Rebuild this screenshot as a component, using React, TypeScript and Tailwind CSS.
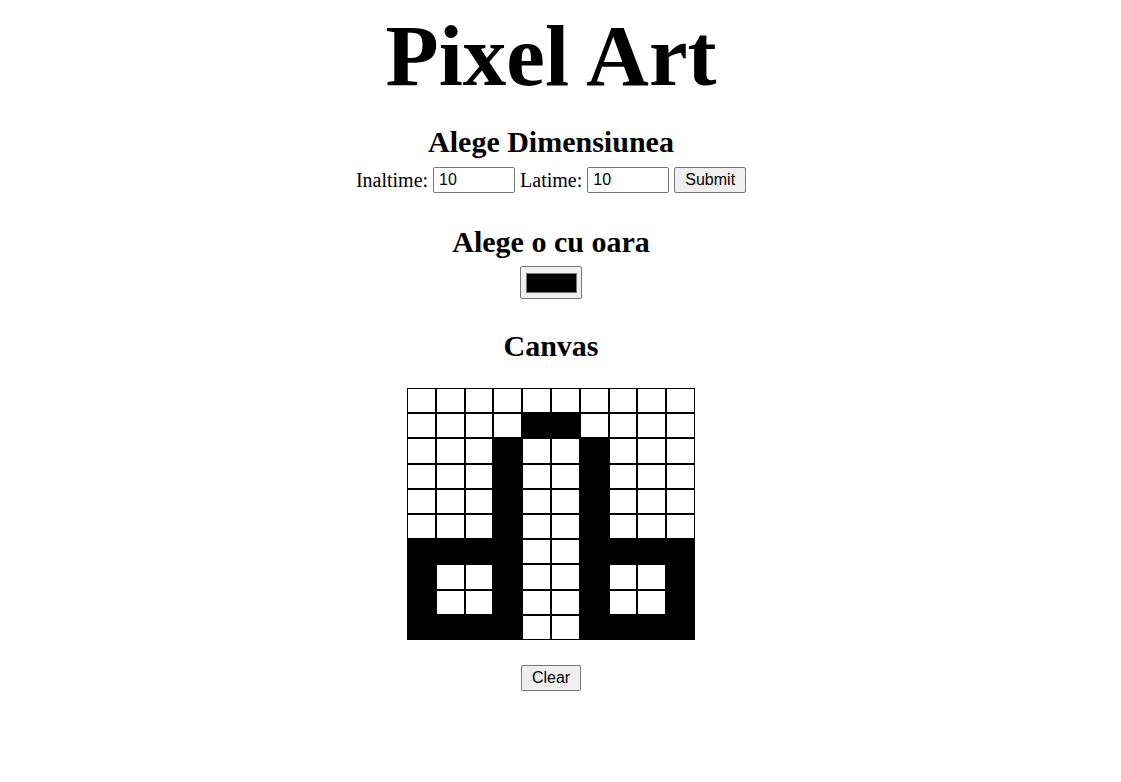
import { useState } from "react";

const ROWS = 10;
const COLS = 10;

// cells painted black in the reference drawing
const filled = new Set<string>([
  "1-4", "1-5",
  "2-3", "2-6", "3-3", "3-6", "4-3", "4-6", "5-3", "5-6",
  "6-0", "6-1", "6-2", "6-3", "6-6", "6-7", "6-8", "6-9",
  "7-0", "7-3", "7-6", "7-9",
  "8-0", "8-3", "8-6", "8-9",
  "9-0", "9-1", "9-2", "9-3", "9-6", "9-7", "9-8", "9-9",
]);

const serif = "font-['Liberation_Serif','Times_New_Roman',serif]";
const sans = "font-['Liberation_Sans',Arial,sans-serif]";

const App = () => {
  const [height, setHeight] = useState("10");
  const [width, setWidth] = useState("10");
  const [cells, setCells] = useState(filled);

  const toggle = (key: string) => {
    const next = new Set(cells);
    if (next.has(key)) next.delete(key);
    else next.add(key);
    setCells(next);
  };

  return (
    <div className={`min-h-screen bg-white text-black ${serif}`}>
      <div className="w-[1102px] text-center">
        <h1 className="pt-[12px] text-[87px] leading-none font-bold">Pixel Art</h1>

        {/* Dimensions */}
        <h2 className="mt-[28px] text-[30px] leading-none font-bold">Alege Dimensiunea</h2>
        <form
          className="mt-[10px] flex items-center justify-center gap-[5px] text-[20px] h-[26px]"
          onSubmit={(e) => e.preventDefault()}
        >
          <span>Inaltime:</span>
          <input
            value={height}
            onChange={(e) => setHeight(e.target.value)}
            className={`w-[82px] h-[26px] border border-[#767676] rounded-[2px] px-[5px] text-[16px] ${sans}`}
          />
          <span>Latime:</span>
          <input
            value={width}
            onChange={(e) => setWidth(e.target.value)}
            className={`w-[82px] h-[26px] border border-[#767676] rounded-[2px] px-[5px] text-[16px] ${sans}`}
          />
          <button
            type="submit"
            className={`h-[26px] px-[10px] border border-[#767676] rounded-[2px] bg-[#efefef] text-[16px] ${sans}`}
          >
            Submit
          </button>
        </form>

        {/* Color */}
        <h2 className="mt-[34px] text-[30px] leading-none font-bold">Alege o cu oara</h2>
        <div className="mt-[9px] flex justify-center">
          <div className="w-[62px] h-[33px] border border-[#767676] rounded-[2px] bg-[#efefef] flex items-center justify-center">
            <div className="w-[51px] h-[20px] bg-black border border-[#777]" />
          </div>
        </div>

        {/* Canvas */}
        <h2 className="mt-[32px] text-[30px] leading-none font-bold">Canvas</h2>
        <div className="mt-[27px] flex justify-center">
          <div className="grid grid-cols-10 grid-rows-10 w-[288px] h-[252px]">
            {Array.from({ length: ROWS * COLS }).map((_, i) => {
              const key = `${Math.floor(i / COLS)}-${i % COLS}`;
              return (
                <div
                  key={key}
                  onClick={() => toggle(key)}
                  className={`border border-black ${cells.has(key) ? "bg-black" : "bg-white"}`}
                />
              );
            })}
          </div>
        </div>

        <div className="mt-[25px] flex justify-center">
          <button
            onClick={() => setCells(new Set())}
            className={`h-[26px] px-[10px] border border-[#767676] rounded-[2px] bg-[#efefef] text-[16px] ${sans}`}
          >
            Clear
          </button>
        </div>
      </div>
    </div>
  );
};

export default App;
